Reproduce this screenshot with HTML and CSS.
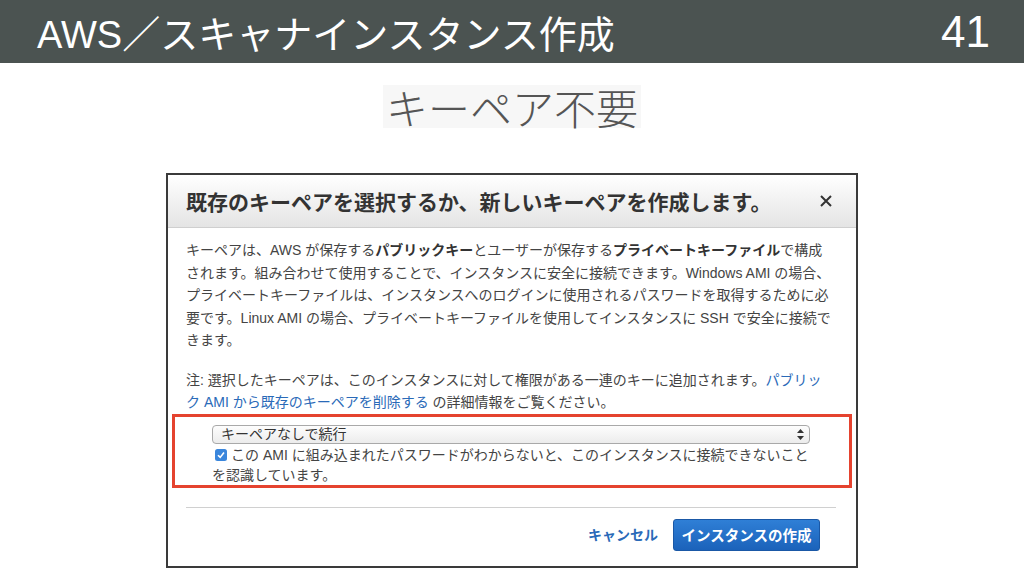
FILE: index.html
```html
<!DOCTYPE html>
<html lang="ja">
<head>
  <meta charset="UTF-8">
  <title>AWS／スキャナインスタンス作成</title>
  <link rel="stylesheet" href="styles.css">
</head>
<body>

<div class="topbar">
  <div class="topbar-title">AWS／スキャナインスタンス作成</div>
  <div class="topbar-num">41</div>
</div>

<div class="subtitle-wrap">
  <div class="subtitle">キーペア不要</div>
</div>

<div class="dialog">
  <div class="dialog-head">
    <div class="dialog-title">既存のキーペアを選択するか、新しいキーペアを作成します。</div>
    <svg class="close" width="14" height="14" viewBox="0 0 14 14">
      <path d="M2 2 L12 12 M12 2 L2 12" stroke="#333" stroke-width="2" fill="none"/>
    </svg>
  </div>

  <div class="dialog-body">
    <p class="text">キーペアは、AWS が保存する<b>パブリックキー</b>とユーザーが保存する<b>プライベートキーファイル</b>で構成<br>されます。組み合わせて使用することで、インスタンスに安全に接続できます。Windows AMI の場合、<br>プライベートキーファイルは、インスタンスへのログインに使用されるパスワードを取得するために必<br>要です。Linux AMI の場合、プライベートキーファイルを使用してインスタンスに SSH で安全に接続で<br>きます。</p>

    <p class="text note">注: 選択したキーペアは、このインスタンスに対して権限がある一連のキーに追加されます。<a href="#">パブリッ<br>ク AMI から既存のキーペアを削除する</a> の詳細情報をご覧ください。</p>

    <!-- 赤枠の部分 -->
    <div class="highlight">
      <div class="select">
        <span>キーペアなしで続行</span>
        <svg width="7" height="11" viewBox="0 0 7 11">
          <path d="M3.5 0 L7 4 L0 4 Z M0 7 L7 7 L3.5 11 Z" fill="#333"/>
        </svg>
      </div>
      <div class="check-line">
        <svg class="checkbox" width="12" height="12" viewBox="0 0 12 12">
          <rect x="0" y="0" width="12" height="12" rx="2.5" fill="#3a86dc"/>
          <path d="M3 6.2 L5.2 8.4 L9 3.6" stroke="#fff" stroke-width="1.6" fill="none"/>
        </svg>この AMI に組み込まれたパスワードがわからないと、このインスタンスに接続できないこと<br>を認識しています。
      </div>
    </div>

    <div class="separator"></div>

    <div class="dialog-foot">
      <a href="#" class="cancel">キャンセル</a>
      <button class="btn-primary">インスタンスの作成</button>
    </div>
  </div>
</div>

</body>
</html>
```

FILE: styles.css
```css
body {
  margin: 0;
  background: #fff;
  font-family: "Liberation Sans", "Noto Sans CJK JP", sans-serif;
}

.topbar {
  height: 63px;
  background: #4b5351;
  color: #fff;
  display: flex;
  align-items: center;
  justify-content: space-between;
  padding: 0 34px 0 37px;
}

.topbar-title {
  font-size: 38px;
}

.topbar-num {
  font-size: 44px;
}

.subtitle-wrap {
  text-align: center;
  margin-top: 22px;
}

.subtitle {
  display: inline-block;
  background: #f7f7f7;
  color: #555;
  font-family: "Noto Sans CJK JP", sans-serif;
  font-weight: 300;
  font-size: 42px;
  line-height: 43px;
  padding: 0 3px;
}

.dialog {
  width: 692px;
  box-sizing: border-box;
  margin: 44px auto 0;
  border: 2px solid #3a3a3a;
  background: #fff;
  color: #444;
}

.dialog-head {
  height: 52px;
  display: flex;
  align-items: center;
  justify-content: space-between;
  padding: 0 23px 0 18px;
  background: linear-gradient(#ffffff, #e4e4e4);
  border-bottom: 1px solid #cfcfcf;
}

.dialog-title {
  font-size: 21px;
  font-weight: bold;
  color: #333;
}

.dialog-body {
  padding: 11px 20px 15px 18px;
  font-size: 14px;
  line-height: 22px;
}

.text {
  margin: 0;
  white-space: nowrap;
  line-height: 22.5px;
}

.text b {
  color: #333;
}

.note {
  margin-top: 17px;
}

.note a {
  color: #2a6ab8;
  text-decoration: none;
}

.highlight {
  margin: 0 -16px 0 -14px;
  border: 3px solid #e5432f;
  padding: 8px 39px 0 37px;
  line-height: 20px;
}

.select {
  height: 19px;
  box-sizing: border-box;
  border: 1px solid #a9a9a9;
  border-radius: 4px;
  background: linear-gradient(#fdfdfd, #ececec);
  display: flex;
  align-items: center;
  justify-content: space-between;
  padding: 0 5px 0 8px;
  margin-bottom: 1px;
  font-size: 14px;
  color: #333;
}

.check-line {
  white-space: nowrap;
}

.checkbox {
  vertical-align: -1px;
  margin: 0 4px 0 3px;
}

.separator {
  height: 1px;
  background: #d0d0d0;
  margin-top: 19px;
}

.dialog-foot {
  display: flex;
  justify-content: flex-end;
  align-items: center;
  gap: 15px;
  margin-top: 11px;
  padding-right: 16px;
}

.cancel {
  color: #2a6ab8;
  font-weight: bold;
  text-decoration: none;
}

.btn-primary {
  width: 147px;
  height: 32px;
  border: 1px solid #1a58a6;
  border-radius: 3px;
  background: linear-gradient(#2f7fd6, #1b62ba);
  color: #fff;
  font-family: inherit;
  font-size: 14.5px;
  font-weight: bold;
}
```
